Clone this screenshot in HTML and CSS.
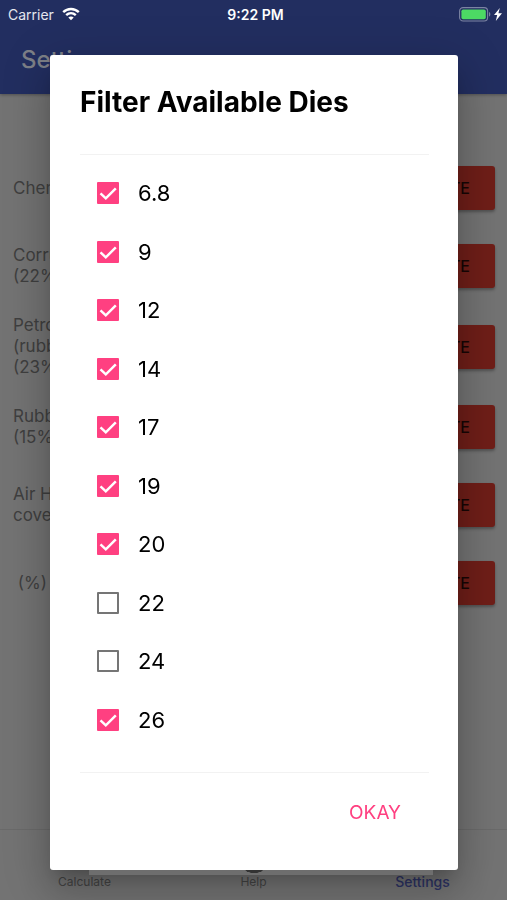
FILE: index.html
```html
<!DOCTYPE html>
<html lang="en">
<head>
<meta charset="utf-8">
<meta name="viewport" content="width=device-width, initial-scale=1">
<title>Settings</title>
<link rel="stylesheet" href="styles.css">
</head>
<body>
<div class="app">
  <header class="header">
    <div class="status">
      <span class="carrier">Carrier
        <svg width="18" height="14" viewBox="0 0 18 14" fill="none" stroke="#fff" stroke-width="2.4" aria-hidden="true"><path d="M1.2 5.2C5.6 .9 12.4 .9 16.8 5.2"/><path d="M4.2 8.2c2.8-2.6 6.800-2.600 9.600 0"/><path d="M6.300 10.500L9 13.300l2.700-2.800c-1.500-1.300-3.900-1.300-5.400 0z" fill="#fff" stroke="none"/></svg>
      </span>
      <span class="time">9:22 PM</span>
      <svg class="battery" width="44" height="15" viewBox="0 0 44 15" aria-hidden="true"><rect x=".6" y=".6" width="28" height="13.400" rx="3.500" fill="none" stroke="#7c84a3" stroke-width="1.100"/><rect x="2.400" y="2.400" width="24.400" height="9.800" rx="1.800" fill="#4cd964"/><path d="M30 5c1.800.6 1.800 4 0 4.600z" fill="#7c84a3"/><path d="M40.800 1L35 8h3.200l-1.400 6L43 6.300h-3.600z" fill="#fff"/></svg>
    </div>
    <h1 class="page-title">Settings</h1>
  </header>
  <main class="content">
    <ul class="materials">
      <li class="material"><span>Chenille</span><button class="delete" type="button">DELETE</button></li>
      <li class="material"><span>Corrugated<br>(22%)</span><button class="delete" type="button">DELETE</button></li>
      <li class="material"><span>Petroleum<br>(rubber)<br>(23%)</span><button class="delete" type="button">DELETE</button></li>
      <li class="material"><span>Rubber<br>(15%)</span><button class="delete" type="button">DELETE</button></li>
      <li class="material"><span>Air Hose<br>cover</span><button class="delete" type="button">DELETE</button></li>
      <li class="material"><span>&nbsp;(%)</span><button class="delete" type="button">DELETE</button></li>
    </ul>
  </main>
  <nav class="tabs">
    <a class="tab" href="#calculate">Calculate</a>
    <a class="tab" href="#help">Help</a>
    <a class="tab active" href="#settings">Settings</a>
  </nav>
</div>
<div class="overlay">
  <form class="dialog" role="dialog" aria-labelledby="dialog-title">
    <h2 class="dialog-title" id="dialog-title">Filter Available Dies</h2>
    <div class="options">
      <label class="option"><input type="checkbox" checked>6.8</label>
      <label class="option"><input type="checkbox" checked>9</label>
      <label class="option"><input type="checkbox" checked>12</label>
      <label class="option"><input type="checkbox" checked>14</label>
      <label class="option"><input type="checkbox" checked>17</label>
      <label class="option"><input type="checkbox" checked>19</label>
      <label class="option"><input type="checkbox" checked>20</label>
      <label class="option"><input type="checkbox">22</label>
      <label class="option"><input type="checkbox">24</label>
      <label class="option"><input type="checkbox" checked>26</label>
    </div>
    <div class="actions"><button class="okay" type="button">OKAY</button></div>
    <span class="ledge"></span>
  </form>
</div>
</body>
</html>
```
FILE: styles.css
```css
* {
  box-sizing: border-box;
}

body {
  margin: 0;
  font-family: Inter, "Liberation Sans", sans-serif;
  background: #737373;
}

button {
  border: 0;
  font-family: inherit;
}

.app {
  display: flex;
  flex-direction: column;
  min-height: 100vh;
}

.header {
  height: 94px;
  background: #222e60;
  box-shadow: 0 1px 3px rgba(0, 0, 0, 0.3);
}

.status {
  display: grid;
  grid-template-columns: 1fr auto 1fr;
  align-items: center;
  height: 28px;
  padding: 0 4px 0 8px;
  color: #fff;
  font-size: 14px;
}

.carrier {
  display: flex;
  align-items: center;
  gap: 8px;
  color: #e4e6ee;
}

.time {
  font-weight: 600;
}

.battery {
  justify-self: end;
}

.page-title {
  margin: 16px 0 0 21px;
  color: #7d8087;
  font-size: 24px;
  font-weight: 500;
  line-height: 32px;
}

.content {
  flex: 1;
  padding-top: 55px;
}

.materials {
  margin: 0;
  padding: 0;
  list-style: none;
}

.material {
  display: flex;
  align-items: center;
  justify-content: space-between;
  min-height: 78px;
  padding: 10px 12px 10px 13px;
  color: #3f3f3f;
  font-size: 17px;
  line-height: 21px;
}

.delete {
  height: 44px;
  padding: 0 25px;
  border-radius: 3px;
  background: #6f1e18;
  color: #170504;
  font-size: 16px;
  font-weight: 500;
  box-shadow: 0 2px 3px rgba(0, 0, 0, 0.3);
}

.tabs {
  display: grid;
  grid-template-columns: repeat(3, 1fr);
  align-items: end;
  height: 71px;
  padding-bottom: 8px;
  border-top: 1px solid #6a6a6a;
}

.tab {
  color: #434343;
  font-size: 12px;
  line-height: 20px;
  text-align: center;
  text-decoration: none;
}

.tab.active {
  color: #2c3263;
  font-size: 14px;
  font-weight: 500;
}

.overlay {
  position: fixed;
  inset: 0;
  display: flex;
  padding: 55px 49px 30px 50px;
}

.dialog {
  position: relative;
  display: flex;
  flex: 1;
  flex-direction: column;
  padding: 0 29px 0 30px;
  border-radius: 3px;
  background: #fff;
  box-shadow: 0 12px 16px -7px rgba(0, 0, 0, 0.2), 0 24px 38px 3px rgba(0, 0, 0, 0.14), 0 9px 46px 8px rgba(0, 0, 0, 0.12);
}

.dialog-title {
  margin: 0;
  padding: 30px 0 35px;
  border-bottom: 1px solid #f2f2f2;
  font-size: 28px;
  font-weight: 700;
  line-height: 34px;
}

.options {
  display: grid;
  flex: 1;
  grid-auto-rows: 1fr;
  padding: 9px 0 23px 17px;
}

.option {
  display: flex;
  align-items: center;
  gap: 19px;
  font-size: 22px;
}

.option input {
  width: 22px;
  height: 22px;
  margin: 0;
  border: 2px solid #757575;
  border-radius: 1px;
  appearance: none;
}

.option input:checked {
  border: 0;
  background: #ff4081 url("data:image/svg+xml,%3Csvg xmlns='http://www.w3.org/2000/svg' viewBox='0 0 22 22'%3E%3Cpath d='M3.500 11.300L8.800 16.300L18.800 6.300' fill='none' stroke='white' stroke-width='2.500'/%3E%3C/svg%3E");
}

.actions {
  display: flex;
  align-items: flex-start;
  justify-content: flex-end;
  height: 98px;
  padding-top: 18px;
  border-top: 1px solid #f2f2f2;
}

.okay {
  height: 42px;
  padding: 0 28px;
  background: transparent;
  color: #ff4081;
  font-size: 19px;
}

.ledge {
  position: absolute;
  top: 100%;
  right: 25px;
  left: 39px;
  height: 5px;
  background: radial-gradient(ellipse 9px 3px at 48% 0, #333 90%, transparent), #6e6e6e;
}
```
